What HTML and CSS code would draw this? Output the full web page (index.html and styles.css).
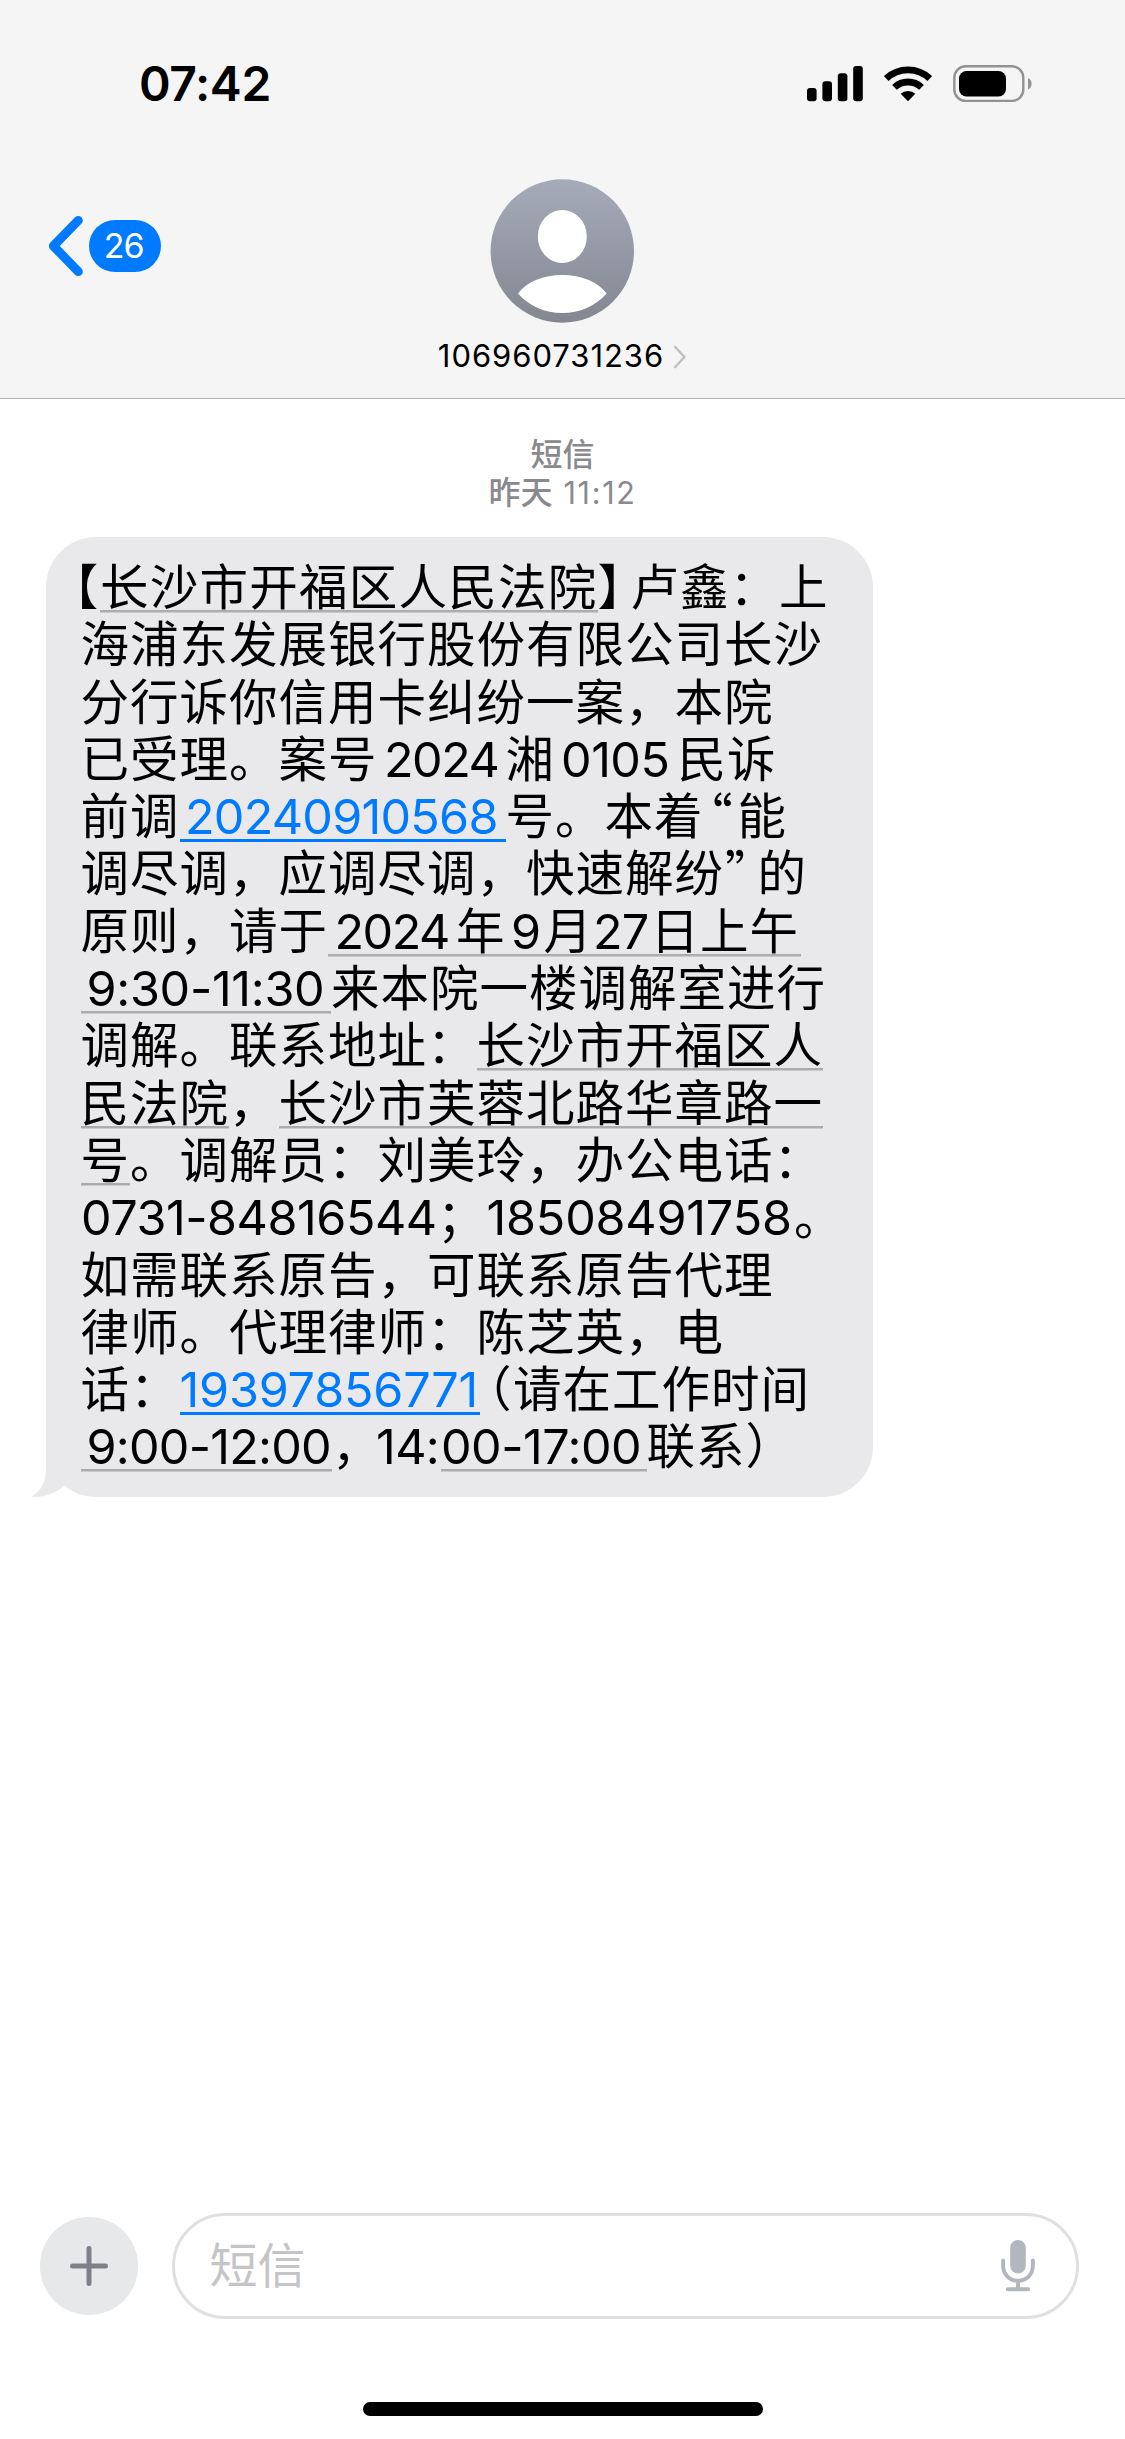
FILE: index.html
```html
<!DOCTYPE html>
<html lang="zh-CN">
<head>
<meta charset="utf-8">
<meta name="viewport" content="width=1125">
<title>短信</title>
<link rel="stylesheet" href="styles.css">
</head>
<body>
<header class="header">
  <div class="status">
    <time class="clock">07:42</time>
    <div class="indicators">
      <svg class="signal" width="56" height="36" viewBox="0 0 56 36"><rect x="0" y="22" width="9.6" height="13.3" rx="3"/><rect x="15.4" y="15.3" width="9.6" height="20" rx="3"/><rect x="30.8" y="7.3" width="9.6" height="28" rx="3"/><rect x="46.2" y="0" width="9.6" height="35.3" rx="3"/></svg>
      <svg class="wifi" width="48" height="36" viewBox="0 0 48 36"><g fill="none" stroke="#000" stroke-width="6.8"><path d="M2.2 12.6a31.6 31.6 0 0 1 43.6 0"/><path d="M10.5 21.4a19.6 19.6 0 0 1 27 0"/></g><path d="M16.7 27.8a10.8 10.8 0 0 1 14.6 0L24 35.3z"/></svg>
      <svg class="battery" width="80" height="38" viewBox="0 0 80 38"><rect x="1.3" y="1.3" width="69" height="34.6" rx="11.5" fill="none" stroke="#929292" stroke-width="2.4"/><rect x="6" y="6" width="47" height="25.4" rx="7.5"/><path d="M75 13v11.4c2.400-1 3.600-3.100 3.600-5.700s-1.200-4.700-3.600-5.700z" fill="#929292"/></svg>
    </div>
  </div>
  <nav class="nav">
    <a class="back">
      <svg width="36" height="62" viewBox="0 0 36 62"><path d="M30.300 5.400 5.400 31l24.900 25.600" fill="none" stroke="#007aff" stroke-width="9" stroke-linecap="round" stroke-linejoin="round"/></svg>
      <span class="unread">26</span>
    </a>
    <div class="contact">
      <svg class="avatar" width="144" height="144" viewBox="0 0 144 144">
        <defs><linearGradient id="avatar-fill" x1="0" y1="0" x2="0" y2="1"><stop offset="0" stop-color="#a5abb9"/><stop offset="1" stop-color="#848791"/></linearGradient></defs>
        <circle cx="72.300" cy="72" r="71.700" fill="url(#avatar-fill)"/>
        <ellipse cx="72.300" cy="57.500" rx="24.500" ry="26.500" fill="#fff"/>
        <path d="M27.900 114.500C37.300 102.500 53.300 96 72.300 96s35 6.500 44.400 18.500C105.300 127 89.800 134 72.300 134s-33-7-44.400-19.500z" fill="#fff"/>
      </svg>
      <div class="name"><span>106960731236</span><svg width="14" height="24" viewBox="0 0 14 24"><path d="M2 1.800 11.500 12 2 22.200" fill="none" stroke="#bfbfc1" stroke-width="2.400" stroke-linecap="round" stroke-linejoin="round"/></svg></div>
    </div>
  </nav>
</header>

<main class="thread">
  <div class="meta">
    <div>短信</div>
    <div>昨天<span class="meta-time">11:12</span></div>
  </div>
  <div class="bubble">
    <p class="line"><span class="half bracket-open">【</span><span class="data court">长沙市开福区人民法院</span><span class="half bracket-close">】</span>卢鑫：上</p>
    <p class="line">海浦东发展银行股份有限公司长沙</p>
    <p class="line">分行诉你信用卡纠纷一案，本院</p>
    <p class="line">已受理。案号<span class="num year">2024</span>湘<span class="num court-code">0105</span>民诉</p>
    <p class="line">前调<a class="num link case-no">20240910568</a>号。本着<span class="quote-open"><q>“</q></span>能</p>
    <p class="line">调尽调，应调尽调，快速解纷<span class="quote-close"><q>”</q></span>的</p>
    <p class="line">原则，请于<span class="data date"><span class="num year">2024</span>年<span class="num month">9</span>月<span class="num day">27</span>日上午</span></p>
    <p class="line"><span class="num data hearing">9:30-11:30</span>来本院一楼调解室进行</p>
    <p class="line">调解。联系地址：<span class="data">长沙市开福区人</span></p>
    <p class="line"><span class="data">民法院</span>，<span class="data">长沙市芙蓉北路华章路一</span></p>
    <p class="line"><span class="data">号</span>。调解员：刘美玲，办公电话：</p>
    <p class="line"><span class="num office-phone">0731-84816544</span>；<span class="num mobile-phone">18508491758</span>。</p>
    <p class="line">如需联系原告，可联系原告代理</p>
    <p class="line">律师。代理律师：陈芝英，电</p>
    <p class="line">话：<a class="num link lawyer-phone">19397856771</a><span class="half paren-open">（</span>请在工作时间</p>
    <p class="line"><span class="num data morning">9:00-12:00</span><span class="half comma">，</span><span class="num hour">14:</span><span class="num data afternoon">00-17:00</span>联系）</p>
    <svg class="tail" width="52" height="52" viewBox="0 0 52 52"><path d="M15 0v24c0 12-4 21-15 27.800 12.500.800 24-3 33-10.800L52 20V0z" fill="#e9e9eb"/></svg>
  </div>
</main>

<footer class="composer">
  <button class="add" aria-label="添加"><svg width="40" height="40" viewBox="0 0 40 40"><path d="M20 2.500v35M3.500 20h33" stroke="#7f8087" stroke-width="5" stroke-linecap="round"/></svg></button>
  <div class="field">
    <span class="placeholder">短信</span>
    <svg width="34" height="52" viewBox="0 0 34 52"><rect x="9.200" y="0" width="15.600" height="33.500" rx="7.800" fill="#b1b6bf"/><path d="M2.100 20.500v5c0 8.700 6.200 15.300 14.900 15.300s14.900-6.600 14.900-15.300v-5M17 41v7M6.800 49.200h20.400" fill="none" stroke="#b1b6bf" stroke-width="3.900" stroke-linecap="round"/></svg>
  </div>
</footer>
<div class="home-bar"></div>
</body>
</html>
```
FILE: styles.css
```css
* { box-sizing: border-box; }
body {
  margin: 0;
  width: 1125px;
  height: 2439px;
  display: flex;
  flex-direction: column;
  background: #fff;
  color: #000;
  font-family: "Inter", "Noto Sans CJK SC", sans-serif;
  text-spacing-trim: space-all;
}
svg { display: block; flex: none; }

/* Header */
.header {
  height: 399px;
  padding-top: 60px;
  background: #f5f5f5;
  border-bottom: 1px solid #b0b0b2;
}
.status {
  display: flex;
  justify-content: space-between;
  align-items: center;
  height: 48px;
  padding: 0 92px 0 139px;
}
.clock { font-size: 48px; line-height: 48px; font-weight: 600; letter-spacing: -.4px; }
.indicators { display: flex; align-items: center; }
.wifi { margin-left: 21px; }
.battery { margin-left: 21px; }
.nav {
  display: grid;
  grid-template-columns: 1fr auto 1fr;
  margin-top: 70.5px;
}
.back { display: flex; align-items: center; height: 62px; margin: 36px 0 0 48px; }
.unread {
  width: 71.5px;
  height: 52px;
  margin-left: 5px;
  padding-right: 2px;
  border-radius: 26px;
  background: #007aff;
  color: #fff;
  font-size: 34px;
  line-height: 52px;
  text-align: center;
  letter-spacing: -1px;
}
.contact { display: flex; flex-direction: column; align-items: center; }
.name {
  display: flex;
  align-items: center;
  gap: 9px;
  margin-top: 13px;
  font-size: 31px;
  line-height: 40px;
  letter-spacing: .95px;
}
.name svg { margin-top: 3px; }

/* Thread */
.thread { flex: 1; padding: 37px 0 0 46px; }
.meta {
  height: 75px;
  margin: 0 0 26px -46px;
  color: #8a8a8e;
  font-size: 32px;
  line-height: 37.5px;
  font-weight: 500;
  text-align: center;
}
.meta-time { margin-left: 11px; font-size: 30.5px; line-height: 1; font-weight: 400; letter-spacing: 1.7px; }
.bubble {
  position: relative;
  isolation: isolate;
  width: 827px;
  height: 960px;
  padding: 22px 0 0 34.5px;
  border-radius: 50px;
  background: #e9e9eb;
  font-size: 48.5px;
  line-height: 57.3px;
  letter-spacing: 1px;
}
.line { margin: 0; height: 57.3px; white-space: nowrap; }
.line span, .line a { display: inline-block; height: 57.3px; }
.data { background: linear-gradient(#acacae, #acacae) 0 51px / 100% 2.5px no-repeat; }
.link { color: #007aff; background: linear-gradient(#007aff, #007aff) 0 51px / 100% 3px no-repeat; }

/* Full-width punctuation set at half width */
.half { font-feature-settings: "halt"; }
.bracket-open { width: 26px; margin-left: -6.5px; }
.bracket-close { width: 33px; }
.paren-open { width: 33px; padding-left: 7.2px; }
.comma { width: 43px; }
q {
  quotes: none;
  font-family: "Noto Sans CJK SC", sans-serif;
  font-feature-settings: "halt";
  line-height: 0;
}
.quote-open { width: 34px; padding-left: 5px; }
.quote-close { width: 33.5px; padding-left: 1px; }

/* Latin runs: side gaps and tracking */
.court { letter-spacing: 1.25px; }
.year { width: 128px; padding-left: 6.5px; letter-spacing: -1.5px; }
.court-code { width: 122.5px; padding-left: 6px; letter-spacing: -.5px; }
.case-no { width: 326px; padding-left: 5.5px; letter-spacing: -.75px; }
.date { padding-right: 2px; }
.month { width: 38px; padding-left: 5.5px; }
.day { width: 57.5px; letter-spacing: -1px; }
.hearing { width: 250.5px; padding-left: 6px; letter-spacing: -.3px; }
.office-phone { width: 356.5px; padding-left: .5px; letter-spacing: -.45px; }
.mobile-phone { width: 307.5px; letter-spacing: -.2px; }
.lawyer-phone { width: 300.5px; letter-spacing: -.2px; }
.morning { width: 251.5px; padding-left: 6px; letter-spacing: -.77px; }
.hour { width: 66px; padding-left: 1px; letter-spacing: -.6px; }
.afternoon { width: 205.5px; letter-spacing: -.5px; }
.tail { position: absolute; z-index: -1; left: -15px; bottom: 0; }

/* Composer */
.composer {
  display: flex;
  align-items: center;
  gap: 34.5px;
  height: 106px;
  padding: 0 46px 0 40px;
}
.add {
  display: grid;
  place-items: center;
  width: 97.5px;
  height: 97.5px;
  padding: 0;
  border: 0;
  border-radius: 50%;
  background: #e7e8ea;
}
.field {
  flex: 1;
  display: flex;
  justify-content: space-between;
  align-items: center;
  height: 106px;
  padding: 0 41px 0 34.5px;
  border: 3px solid #e0e0e0;
  border-radius: 53px;
}
.placeholder { color: #c5c5c7; font-size: 48px; line-height: 60px; }
.home-bar {
  width: 400px;
  height: 14px;
  margin: 83px auto 23px;
  border-radius: 7px;
  background: #000;
}
```
